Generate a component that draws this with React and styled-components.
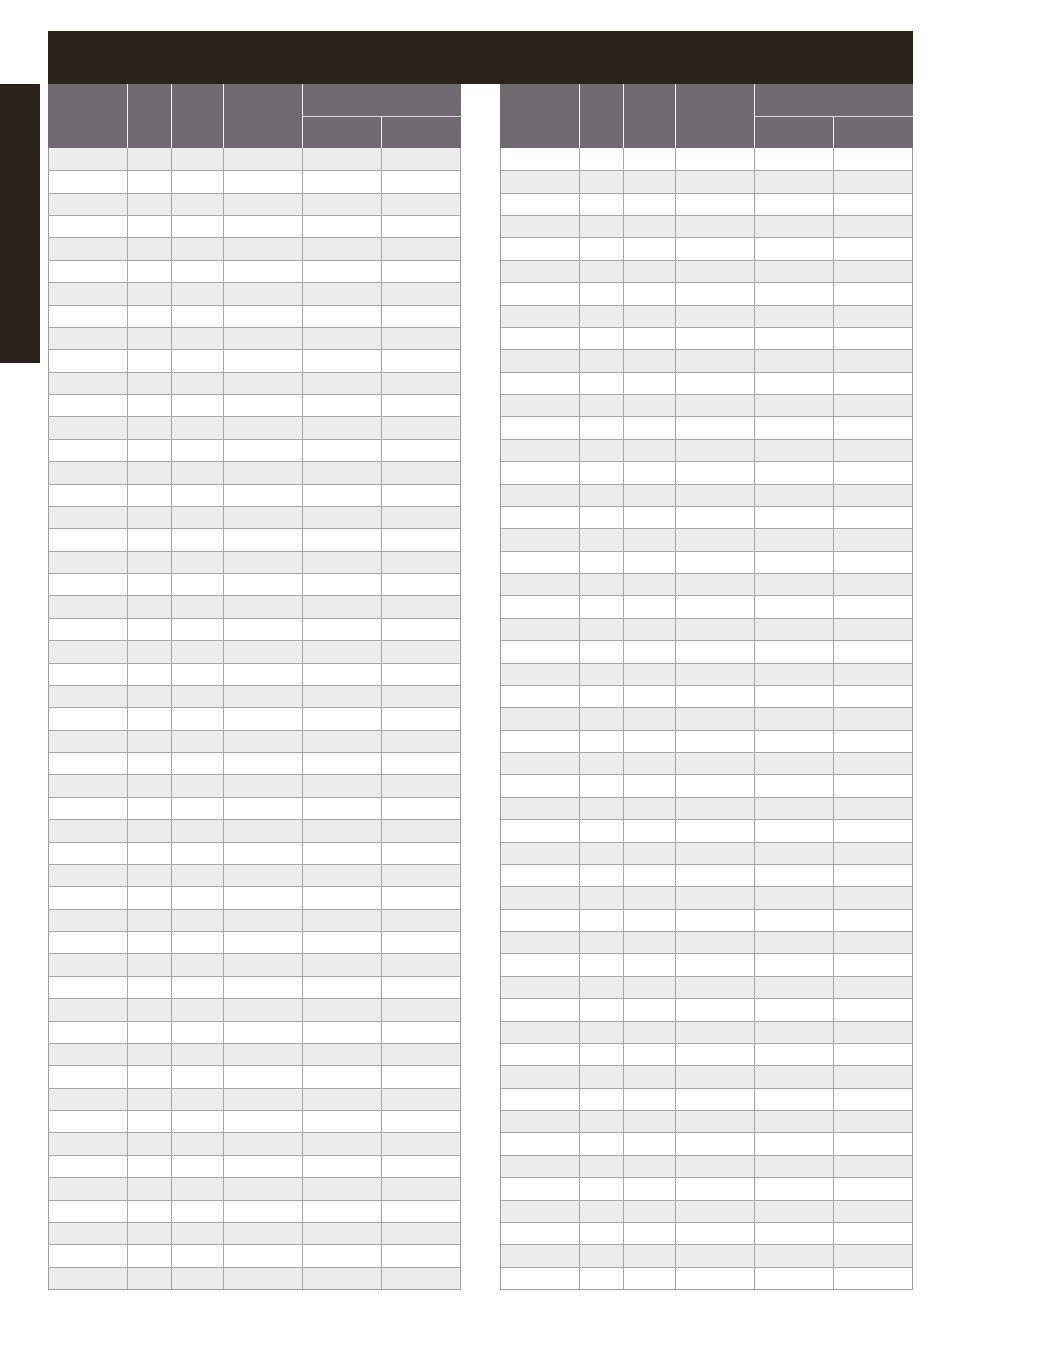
import React from "react"
import styled, { createGlobalStyle } from "styled-components"

const GlobalStyle = createGlobalStyle`
  body {
    margin: 0;
    background: #ffffff;
    font-family: "Liberation Sans", Arial, sans-serif;
  }
`

const COLS = "79px 44px 52px 79px 79px 80px"
const BODY_COLS = "78px 44px 52px 79px 79px 79px"
const ROW_COUNT = 51

const Page = styled.div`
  width: 1055px;
  height: 1369px;
  padding-top: 31px;
  box-sizing: border-box;
`

const Banner = styled.div`
  margin-left: 48px;
  width: 865px;
  height: 53px;
  background: #2a2219;
`

const Body = styled.div`
  display: flex;
  align-items: flex-start;
`

const SideTab = styled.div`
  width: 40px;
  height: 279px;
  background: #2a2219;
  margin-right: 8px;
`

const Tables = styled.div`
  display: flex;
  gap: 39px;
`

const Table = styled.div`
  width: 413px;
  display: flex;
  flex-direction: column;
`

const Head = styled.div`
  display: grid;
  grid-template-columns: ${COLS};
  grid-template-rows: 32px 32px;
  background: #6f6a70;
  height: 64px;
`

const HeadCell = styled.div`
  grid-row: ${(p) => p.$row || "auto"};
  grid-column: ${(p) => p.$col || "auto"};
  border-left: ${(p) => (p.$first ? "none" : "1px solid #f2f2f2")};
  border-top: ${(p) => (p.$sub ? "1px solid #d8d6da" : "none")};
  box-sizing: border-box;
`

const Rows = styled.div`
  display: grid;
  grid-template-rows: repeat(${ROW_COUNT}, 1fr);
  height: 1142px;
  border-left: 1px solid #9c9c9c;
  border-right: 1px solid #9c9c9c;
  border-bottom: 1px solid #9c9c9c;
  box-sizing: border-box;
`

const Row = styled.div`
  display: grid;
  grid-template-columns: ${BODY_COLS};
  background: ${(p) => (p.$shade ? "#ececec" : "#ffffff")};
  border-top: ${(p) => (p.$first ? "none" : "1px solid #a6a6a6")};
  box-sizing: border-box;
`

const Cell = styled.div`
  border-left: 1px solid #a6a6a6;
  box-sizing: border-box;

  &:first-child {
    border-left: none;
  }
`

function DataTable({ shadeOdd }) {
  const rows = Array.from({ length: ROW_COUNT })
  return (
    <Table>
      <Head>
        <HeadCell $row="1 / 3" $col="1" $first />
        <HeadCell $row="1 / 3" $col="2" />
        <HeadCell $row="1 / 3" $col="3" />
        <HeadCell $row="1 / 3" $col="4" />
        <HeadCell $row="1" $col="5 / 7" />
        <HeadCell $row="2" $col="5" $sub />
        <HeadCell $row="2" $col="6" $sub />
      </Head>
      <Rows>
        {rows.map((_, i) => (
          <Row key={i} $first={i === 0} $shade={shadeOdd ? i % 2 === 0 : i % 2 === 1}>
            {Array.from({ length: 6 }).map((__, j) => (
              <Cell key={j} />
            ))}
          </Row>
        ))}
      </Rows>
    </Table>
  )
}

const App = () => {
  return (
    <Page>
      <GlobalStyle />
      <Banner />
      <Body>
        <SideTab />
        <Tables>
          <DataTable shadeOdd />
          <DataTable />
        </Tables>
      </Body>
    </Page>
  )
}

export default App
